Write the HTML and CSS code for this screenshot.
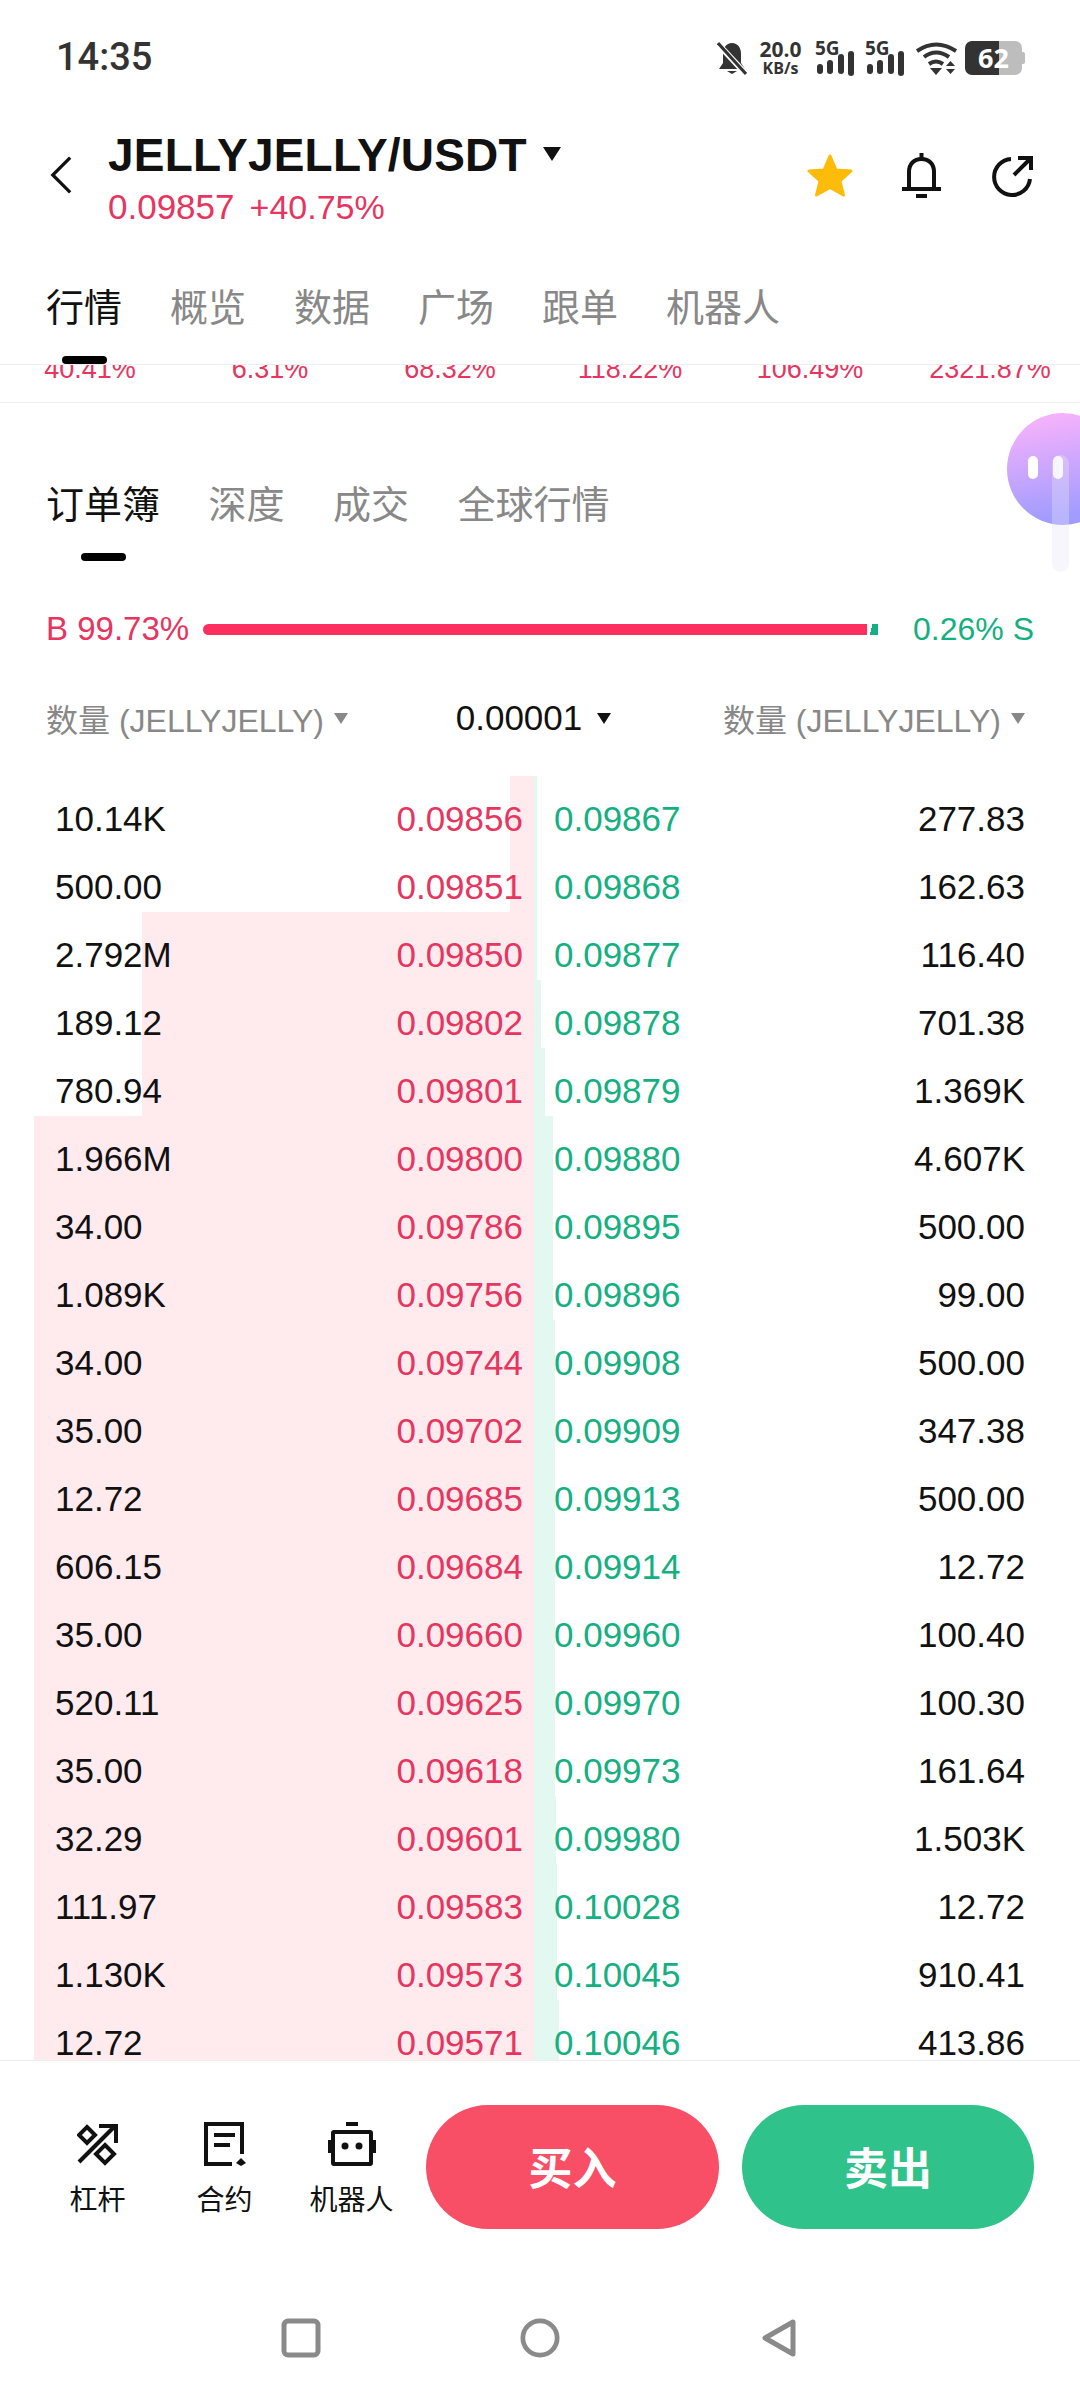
FILE: index.html
```html
<!DOCTYPE html>
<html lang="zh">
<head>
<meta charset="utf-8">
<title>JELLYJELLY/USDT</title>
<link rel="stylesheet" href="styles.css">
</head>
<body>
<div class="page">
  <div class="status">
    <span class="time">14:35</span>
    <div class="status-icons">
      <svg class="ic-mute" viewBox="0 0 30 34"><path d="M15 1c-6 0-9 5-9 11v9l-4 6h26l-4-6v-9c0-6-3-11-9-11z" fill="#333"/><path d="M10 29h10l-5 3z" fill="#333"/><path d="M1 2l28 30" stroke="#fff" stroke-width="6"/><path d="M1 1l28 31" stroke="#333" stroke-width="3"/></svg>
      <div class="speed"><span class="speed-num">20.0</span><span class="speed-unit">KB/s</span></div>
      <div class="sig"><span class="sig-label">5G</span><svg class="ic-bars" viewBox="0 0 40 34"><rect x="2" y="21" width="6" height="10" rx="3" fill="#333"/><rect x="12" y="17" width="6" height="14" rx="3" fill="#333"/><rect x="23" y="11" width="6" height="20" rx="3" fill="#333"/><rect x="33" y="8" width="6" height="25" rx="3" fill="#333"/></svg></div>
      <div class="sig"><span class="sig-label">5G</span><svg class="ic-bars" viewBox="0 0 40 34"><rect x="2" y="21" width="6" height="10" rx="3" fill="#333"/><rect x="12" y="17" width="6" height="14" rx="3" fill="#333"/><rect x="23" y="11" width="6" height="20" rx="3" fill="#333"/><rect x="33" y="8" width="6" height="25" rx="3" fill="#333"/></svg></div>
      <svg class="ic-wifi" viewBox="0 0 41 34"><g fill="none" stroke="#333" stroke-width="4"><path d="M1 10Q20-3 40 10"/><path d="M8 16Q20 7 33 16"/><path d="M13 23Q20 18 27 23"/></g><path d="M14 27h12l-6 7z" fill="#333"/><path d="M30 25h9l-4.500-5zM30 28h9l-4.500 5z" fill="#333"/></svg>
      <div class="battery"><span class="battery-num">62</span></div>
    </div>
  </div>

  <div class="header">
    <svg class="ic-back" viewBox="0 0 24 42"><path d="M22 2L3 21l19 19" fill="none" stroke="#111" stroke-width="3.500"/></svg>
    <div class="pair">
      <div class="pair-name"><span>JELLYJELLY/USDT</span><i class="caret caret-title"></i></div>
      <div class="pair-price"><span>0.09857</span><span class="pair-pct">+40.75%</span></div>
    </div>
    <div class="header-icons">
      <svg class="ic-star" viewBox="0 0 46 44"><path d="M23 3l6 14 15 1-11 10 3.500 14L23 34.500 9.500 42 13 28 2 18l15-1z" fill="#fdbb0a" stroke="#fdbb0a" stroke-width="3" stroke-linejoin="round"/></svg>
      <svg class="ic-bell" viewBox="0 0 39 46"><g fill="none" stroke="#111" stroke-width="4"><path d="M7 37V20C7 12 12 7 19.500 7S32 12 32 20V37"/><path d="M0 37H39"/><path d="M19.500 1V7"/></g><rect x="14" y="42" width="11" height="4" fill="#111"/></svg>
      <svg class="ic-share" viewBox="0 0 42 42"><g fill="none" stroke="#111" stroke-width="4"><path d="M20 4A18 18 0 1 0 39 24"/><path d="M23 20L39 4"/><path d="M27 3H40V15"/></g></svg>
    </div>
  </div>

  <div class="tabs">
    <span class="tab tab-on">行情</span><span class="tab">概览</span><span class="tab">数据</span><span class="tab">广场</span><span class="tab">跟单</span><span class="tab">机器人</span>
  </div>

  <div class="strip">
    <span>40.41%</span><span>6.31%</span><span>68.32%</span><span>118.22%</span><span>106.49%</span><span>2321.87%</span>
  </div>

  <div class="subtabs">
    <span class="tab tab-on">订单簿</span><span class="tab">深度</span><span class="tab">成交</span><span class="tab">全球行情</span>
  </div>

  <div class="balance">
    <span class="bal-buy">B 99.73%</span>
    <div class="bal-track"><div class="bal-red"></div><div class="bal-green"></div></div>
    <span class="bal-sell">0.26% S</span>
  </div>

  <div class="book-head">
    <span class="head-item">数量 (JELLYJELLY)<i class="caret caret-gray"></i></span>
    <span class="head-item head-mid">0.00001<i class="caret caret-dark"></i></span>
    <span class="head-item">数量 (JELLYJELLY)<i class="caret caret-gray"></i></span>
  </div>

  <div class="book">
    <div class="row"><i class="bar-bid" style="width:24px"></i><i class="bar-ask" style="width:3px"></i><span class="qty">10.14K</span><span class="bid">0.09856</span><span class="ask">0.09867</span><span class="qty qty-r">277.83</span></div>
    <div class="row"><i class="bar-bid" style="width:24px"></i><i class="bar-ask" style="width:3px"></i><span class="qty">500.00</span><span class="bid">0.09851</span><span class="ask">0.09868</span><span class="qty qty-r">162.63</span></div>
    <div class="row"><i class="bar-bid" style="width:392px"></i><i class="bar-ask" style="width:3px"></i><span class="qty">2.792M</span><span class="bid">0.09850</span><span class="ask">0.09877</span><span class="qty qty-r">116.40</span></div>
    <div class="row"><i class="bar-bid" style="width:392px"></i><i class="bar-ask" style="width:7px"></i><span class="qty">189.12</span><span class="bid">0.09802</span><span class="ask">0.09878</span><span class="qty qty-r">701.38</span></div>
    <div class="row"><i class="bar-bid" style="width:392px"></i><i class="bar-ask" style="width:11px"></i><span class="qty">780.94</span><span class="bid">0.09801</span><span class="ask">0.09879</span><span class="qty qty-r">1.369K</span></div>
    <div class="row"><i class="bar-bid" style="width:500px"></i><i class="bar-ask" style="width:19px"></i><span class="qty">1.966M</span><span class="bid">0.09800</span><span class="ask">0.09880</span><span class="qty qty-r">4.607K</span></div>
    <div class="row"><i class="bar-bid" style="width:500px"></i><i class="bar-ask" style="width:19px"></i><span class="qty">34.00</span><span class="bid">0.09786</span><span class="ask">0.09895</span><span class="qty qty-r">500.00</span></div>
    <div class="row"><i class="bar-bid" style="width:500px"></i><i class="bar-ask" style="width:19px"></i><span class="qty">1.089K</span><span class="bid">0.09756</span><span class="ask">0.09896</span><span class="qty qty-r">99.00</span></div>
    <div class="row"><i class="bar-bid" style="width:500px"></i><i class="bar-ask" style="width:21px"></i><span class="qty">34.00</span><span class="bid">0.09744</span><span class="ask">0.09908</span><span class="qty qty-r">500.00</span></div>
    <div class="row"><i class="bar-bid" style="width:500px"></i><i class="bar-ask" style="width:21px"></i><span class="qty">35.00</span><span class="bid">0.09702</span><span class="ask">0.09909</span><span class="qty qty-r">347.38</span></div>
    <div class="row"><i class="bar-bid" style="width:500px"></i><i class="bar-ask" style="width:21px"></i><span class="qty">12.72</span><span class="bid">0.09685</span><span class="ask">0.09913</span><span class="qty qty-r">500.00</span></div>
    <div class="row"><i class="bar-bid" style="width:500px"></i><i class="bar-ask" style="width:21px"></i><span class="qty">606.15</span><span class="bid">0.09684</span><span class="ask">0.09914</span><span class="qty qty-r">12.72</span></div>
    <div class="row"><i class="bar-bid" style="width:500px"></i><i class="bar-ask" style="width:21px"></i><span class="qty">35.00</span><span class="bid">0.09660</span><span class="ask">0.09960</span><span class="qty qty-r">100.40</span></div>
    <div class="row"><i class="bar-bid" style="width:500px"></i><i class="bar-ask" style="width:21px"></i><span class="qty">520.11</span><span class="bid">0.09625</span><span class="ask">0.09970</span><span class="qty qty-r">100.30</span></div>
    <div class="row"><i class="bar-bid" style="width:500px"></i><i class="bar-ask" style="width:21px"></i><span class="qty">35.00</span><span class="bid">0.09618</span><span class="ask">0.09973</span><span class="qty qty-r">161.64</span></div>
    <div class="row"><i class="bar-bid" style="width:500px"></i><i class="bar-ask" style="width:22px"></i><span class="qty">32.29</span><span class="bid">0.09601</span><span class="ask">0.09980</span><span class="qty qty-r">1.503K</span></div>
    <div class="row"><i class="bar-bid" style="width:500px"></i><i class="bar-ask" style="width:23px"></i><span class="qty">111.97</span><span class="bid">0.09583</span><span class="ask">0.10028</span><span class="qty qty-r">12.72</span></div>
    <div class="row"><i class="bar-bid" style="width:500px"></i><i class="bar-ask" style="width:23px"></i><span class="qty">1.130K</span><span class="bid">0.09573</span><span class="ask">0.10045</span><span class="qty qty-r">910.41</span></div>
    <div class="row"><i class="bar-bid" style="width:500px"></i><i class="bar-ask" style="width:25px"></i><span class="qty">12.72</span><span class="bid">0.09571</span><span class="ask">0.10046</span><span class="qty qty-r">413.86</span></div>
  </div>

  <div class="toolbar">
    <div class="tool">
      <svg class="ic-lev" viewBox="0 0 42 42"><g fill="none" stroke="#111" stroke-width="4"><path d="M2 39L38 3"/><path d="M22 3H39V20"/><path d="M10 4l8 8-8 8-8-8z"/><path d="M28 22l9 9-9 9-9-9z"/></g></svg>
      <span>杠杆</span>
    </div>
    <div class="tool">
      <svg class="ic-con" viewBox="0 0 42 44"><g fill="none" stroke="#111" stroke-width="4"><path d="M38 32V2H2V42H28"/><path d="M10 13H31"/><path d="M10 23H26"/></g><path d="M37 36l5 5-5 3-5-3z" fill="#111"/></svg>
      <span>合约</span>
    </div>
    <div class="tool">
      <svg class="ic-bot" viewBox="0 0 48 44"><rect x="18" y="0" width="12" height="4" fill="#111"/><rect x="5" y="10" width="38" height="32" rx="1" fill="none" stroke="#111" stroke-width="4"/><rect x="0" y="18" width="3" height="13" fill="#111"/><rect x="45" y="18" width="3" height="13" fill="#111"/><circle cx="17" cy="24" r="3.500" fill="#111"/><circle cx="31" cy="24" r="3.500" fill="#111"/></svg>
      <span>机器人</span>
    </div>
    <button class="btn btn-buy">买入</button>
    <button class="btn btn-sell">卖出</button>
  </div>

  <div class="navbar">
    <svg class="nav-ic" viewBox="0 0 40 40"><rect x="3" y="3" width="34" height="34" rx="4" fill="none" stroke="#8a8a8a" stroke-width="5"/></svg>
    <svg class="nav-ic" viewBox="0 0 42 42"><circle cx="21" cy="21" r="18" fill="none" stroke="#8a8a8a" stroke-width="5"/></svg>
    <svg class="nav-ic" viewBox="0 0 36 40"><path d="M32 4V36L4 20z" fill="none" stroke="#8a8a8a" stroke-width="5" stroke-linejoin="round"/></svg>
  </div>

  <div class="float-scroll"></div>
  <div class="float-bot"><i class="eye eye-a"></i><i class="eye eye-b"></i></div>
</div>
</body>
</html>
```

FILE: styles.css
```css
* { box-sizing: border-box; }
html, body { margin: 0; padding: 0; background: #fff; }
body { font-family: "Liberation Sans", "Noto Sans CJK SC", sans-serif; color: #111; }
.page { position: relative; width: 1080px; height: 2400px; overflow: hidden; background: #fff; }

/* status bar */
.status { height: 116px; padding: 0 58px 0 56px; display: flex; justify-content: space-between; }
.time { font-size: 38px; line-height: 38px; margin-top: 38px; color: #333; font-family: "Roboto", sans-serif; font-weight: 500; }
.status-icons { display: flex; align-items: flex-start; padding-top: 40px; }
.ic-mute { width: 30px; height: 34px; margin-top: 2px; }
.speed { width: 41px; margin-left: 13px; display: flex; flex-direction: column; align-items: center; color: #333; font-weight: 700; font-family: "Open Sans", sans-serif; }
.speed-num { font-size: 21px; line-height: 19px; }
.speed-unit { font-size: 16px; line-height: 18px; }
.sig { position: relative; width: 40px; height: 36px; margin-left: 14px; }
.sig + .sig { margin-left: 10px; }
.sig-label { position: absolute; left: 0; top: 1px; font-size: 19px; line-height: 15px; font-weight: 700; color: #333; font-family: "Open Sans", sans-serif; }
.ic-bars { display: block; width: 40px; height: 34px; margin-top: 3px; }
.ic-wifi { width: 41px; height: 34px; margin-left: 11px; margin-top: 1px; }
.battery { position: relative; width: 57px; height: 34px; margin-left: 8px; margin-top: 1px; border-radius: 7px; background: linear-gradient(90deg, #333 0 60%, #bdbdbd 60% 100%); color: #fff; text-align: center; }
.battery::after { content: ""; position: absolute; right: -3px; top: 11px; width: 3px; height: 12px; background: #bdbdbd; border-radius: 0 2px 2px 0; }
.battery-num { font-size: 27px; line-height: 34px; font-weight: 700; font-family: "Open Sans", sans-serif; }

/* header */
.header { height: 136px; padding: 0 47px 0 50px; display: flex; align-items: flex-start; }
.ic-back { width: 22px; height: 40px; margin-top: 39px; }
.pair { margin-left: 36px; margin-top: 12px; flex: 1; }
.pair-name { display: flex; align-items: flex-start; font-size: 46px; line-height: 54px; font-weight: 700; letter-spacing: 0.2px; color: #111; }
.caret { display: inline-block; width: 0; height: 0; border-style: solid; border-color: transparent; border-bottom-width: 0; }
.caret-title { border-width: 14px 9px 0; border-top-color: #111; margin: 19px 0 0 16px; }
.pair-price { display: flex; gap: 15px; font-size: 35px; line-height: 44px; color: #e6355f; margin-top: 3px; }
.pair-pct { font-size: 34px; }
.header-icons { display: flex; align-items: flex-start; margin-top: 36px; }
.ic-star { width: 46px; height: 44px; margin-top: 1px; }
.ic-bell { width: 39px; height: 46px; margin-left: 49px; }
.ic-share { width: 42px; height: 42px; margin-left: 50px; margin-top: 3px; }

/* tabs */
.tabs { height: 112px; padding-left: 46px; display: flex; gap: 48px; align-items: center; }
.tab { position: relative; font-size: 38px; line-height: 50px; color: #888; }
.tab-on { color: #111; }
.tabs .tab { height: 112px; line-height: 112px; }
.tab-on::after { content: ""; position: absolute; height: 8px; width: 45px; bottom: 0; left: 50%; margin-left: -22px; background: #000; border-radius: 4px; }
.strip { height: 39px; border-top: 1px solid #eee; border-bottom: 1px solid #eee; overflow: hidden; display: grid; grid-template-columns: repeat(6, 1fr); font-size: 27px; line-height: 30px; color: #e6355f; text-align: center; }
.strip span { margin-top: -11px; }
.subtabs { height: 158px; padding: 45px 0 0 46px; display: flex; gap: 48.5px; }
.subtabs .tab { height: 113px; line-height: 115px; }

/* balance */
.balance { height: 136px; padding: 0 46px; display: flex; align-items: center; font-size: 32px; }
.bal-buy { color: #e6355f; font-size: 33px; width: 157px; white-space: nowrap; }
.bal-sell { color: #14b082; margin-left: auto; }
.bal-track { display: flex; width: 675px; height: 11px; }
.bal-red { width: 664px; background: #fd2f5f; border-radius: 6px 0 0 6px; }
.bal-green { width: 11px; background: linear-gradient(105deg, #fff 0 40%, #14b082 40%); }

/* book */
.book-head { height: 42px; margin-bottom: 37px; padding: 0 55px 0 46px; display: flex; justify-content: space-between; align-items: center; font-size: 32px; color: #888; }
.head-item { display: flex; align-items: center; white-space: nowrap; }
.head-mid { color: #111; font-size: 35px; padding-right: 4px; }
.caret-gray { border-width: 11px 7px 0; border-top-color: #888; margin-left: 10px; }
.caret-dark { border-width: 11px 7px 0; border-top-color: #111; margin-left: 15px; }
.book { height: 1284px; overflow: hidden; }
.row { position: relative; height: 68px; padding: 18px 55px 0 55px; display: flex; align-items: center; font-size: 35px; line-height: 34px; }
.row span { position: relative; }
.bar-bid { position: absolute; top: 0; bottom: 0; right: 546px; background: #ffeaee; }
.bar-ask { position: absolute; top: 0; bottom: 0; left: 534px; background: #e2f8f0; }
.qty { flex: 1; color: #111; }
.qty-r { text-align: right; }
.bid { color: #e6355f; margin-right: 31px; }
.ask { color: #14b082; margin-right: 3px; }

/* toolbar */
.toolbar { height: 258px; border-top: 1px solid #eee; padding: 44px 46px 0 34px; display: flex; align-items: flex-start; }
.tool { width: 127px; height: 124px; display: flex; flex-direction: column; align-items: center; font-size: 28px; line-height: 34px; color: #111; }
.tool svg { height: 44px; margin-top: 17px; margin-bottom: 18px; }
.ic-lev { width: 42px; }
.ic-con { width: 42px; }
.ic-bot { width: 48px; }
.btn { height: 124px; border: 0; padding: 0 0 3px; border-radius: 62px; color: #fff; font: 700 44px "Noto Sans CJK SC", sans-serif; }
.btn-buy { width: 293px; background: #f94f66; margin-left: 11px; }
.btn-sell { width: 292px; background: #2fc28a; margin-left: 23px; }

/* nav */
.navbar { height: 82px; padding-left: 281px; display: flex; align-items: flex-start; }
.nav-ic { width: 40px; height: 40px; }
.nav-ic + .nav-ic { margin-left: 199px; }
.nav-ic:last-child { width: 36px; margin-left: 201px; }

/* floating */
.float-bot { position: absolute; left: 1007px; top: 413px; width: 112px; height: 112px; border-radius: 50%; background: linear-gradient(170deg, #feb4fb 0%, #a29cff 85%); }
.float-scroll { position: absolute; z-index: 2; left: 1052px; top: 455px; width: 17px; height: 117px; border-radius: 9px; background: rgba(228, 228, 245, 0.35); }
.eye { position: absolute; top: 43px; width: 10px; height: 23px; border-radius: 5px; background: #fff; }
.eye-a { left: 21px; }
.eye-b { left: 46px; }
```
